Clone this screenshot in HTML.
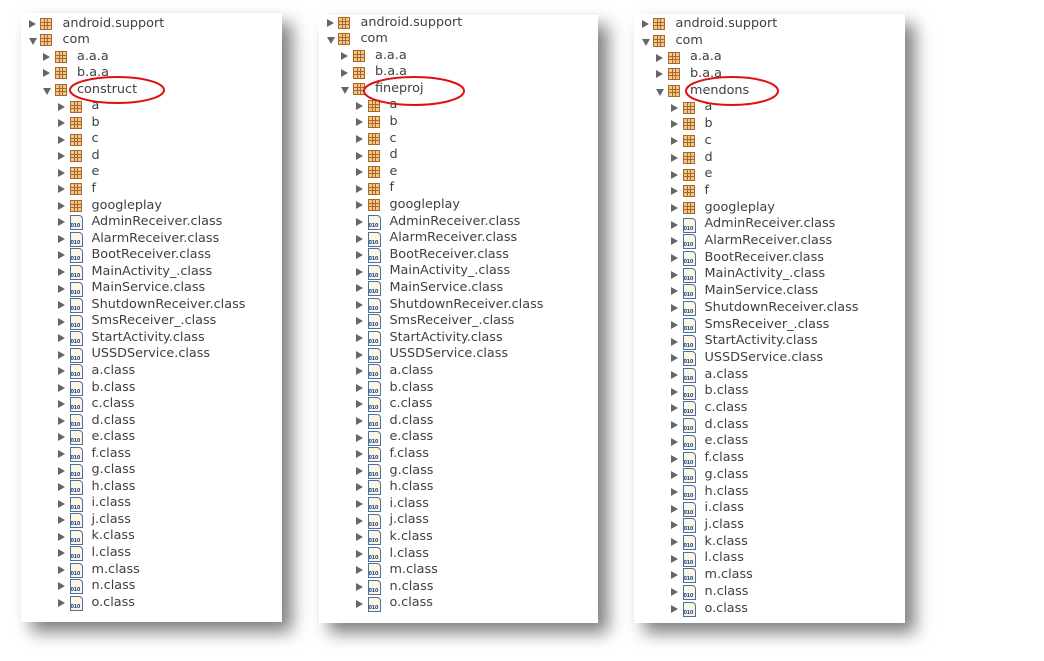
<!DOCTYPE html>
<html><head><meta charset="utf-8"><style>
body{margin:0;width:1044px;height:661px;background:#fff;position:relative;overflow:hidden;font-family:"DejaVu Sans","Liberation Sans",sans-serif;}
.pn{position:absolute;background:#fff;box-shadow:10px 10px 16px rgba(0,0,0,.5);}
.ls{position:absolute;left:0;right:0;}
.r{position:relative;white-space:nowrap;font-size:12.8px;color:#404040;}
.l0{padding-left:41.5px}.l1{padding-left:56px}.l2{padding-left:70.5px}
.x{position:absolute;top:50%;margin-top:-4px;width:0;height:0;border-left:7px solid #666;border-top:4px solid transparent;border-bottom:4px solid transparent;}
.d{position:absolute;top:50%;margin-top:-2px;width:0;height:0;border-top:7px solid #666;border-left:4px solid transparent;border-right:4px solid transparent;}
.l0 .x,.l0 .d{left:8px}.l1 .x,.l1 .d{left:22px}.l2 .x,.l2 .d{left:36.5px}
.k{position:absolute;top:50%;margin-top:-6px;width:10px;height:10px;border:1px solid #a9682a;background:
linear-gradient(90deg,transparent 3px,#a9682a 3px,#a9682a 4px,transparent 4px,transparent 6px,#a9682a 6px,#a9682a 7px,transparent 7px),
linear-gradient(180deg,transparent 3px,#a9682a 3px,#a9682a 4px,transparent 4px,transparent 6px,#a9682a 6px,#a9682a 7px,transparent 7px),#f3c78a;}
.c{position:absolute;top:50%;margin-top:-7px;width:11px;height:13px;border:1px solid #4a6ea8;border-radius:0 4px 0 0;background:#fdf6e0;overflow:hidden;}
.c::after{content:"010";position:absolute;left:0;bottom:0;font:bold 5px "DejaVu Sans",sans-serif;color:#2a4a8a;letter-spacing:-.3px;}
.l0 .k,.l0 .c{left:19px}.l1 .k,.l1 .c{left:33.5px}.l2 .k,.l2 .c{left:48.5px}
</style></head><body>

<div class="pn" style="left:21px;top:13px;width:261px;height:609px"><div class="ls" style="top:2.5px;line-height:16.54px">
<div class="r l0"><s class="x"></s><u class="k"></u>android.support</div>
<div class="r l0"><s class="d"></s><u class="k"></u>com</div>
<div class="r l1"><s class="x"></s><u class="k"></u>a.a.a</div>
<div class="r l1"><s class="x"></s><u class="k"></u>b.a.a</div>
<div class="r l1"><s class="d"></s><u class="k"></u>construct</div>
<div class="r l2"><s class="x"></s><u class="k"></u>a</div>
<div class="r l2"><s class="x"></s><u class="k"></u>b</div>
<div class="r l2"><s class="x"></s><u class="k"></u>c</div>
<div class="r l2"><s class="x"></s><u class="k"></u>d</div>
<div class="r l2"><s class="x"></s><u class="k"></u>e</div>
<div class="r l2"><s class="x"></s><u class="k"></u>f</div>
<div class="r l2"><s class="x"></s><u class="k"></u>googleplay</div>
<div class="r l2"><s class="x"></s><u class="c"></u>AdminReceiver.class</div>
<div class="r l2"><s class="x"></s><u class="c"></u>AlarmReceiver.class</div>
<div class="r l2"><s class="x"></s><u class="c"></u>BootReceiver.class</div>
<div class="r l2"><s class="x"></s><u class="c"></u>MainActivity_.class</div>
<div class="r l2"><s class="x"></s><u class="c"></u>MainService.class</div>
<div class="r l2"><s class="x"></s><u class="c"></u>ShutdownReceiver.class</div>
<div class="r l2"><s class="x"></s><u class="c"></u>SmsReceiver_.class</div>
<div class="r l2"><s class="x"></s><u class="c"></u>StartActivity.class</div>
<div class="r l2"><s class="x"></s><u class="c"></u>USSDService.class</div>
<div class="r l2"><s class="x"></s><u class="c"></u>a.class</div>
<div class="r l2"><s class="x"></s><u class="c"></u>b.class</div>
<div class="r l2"><s class="x"></s><u class="c"></u>c.class</div>
<div class="r l2"><s class="x"></s><u class="c"></u>d.class</div>
<div class="r l2"><s class="x"></s><u class="c"></u>e.class</div>
<div class="r l2"><s class="x"></s><u class="c"></u>f.class</div>
<div class="r l2"><s class="x"></s><u class="c"></u>g.class</div>
<div class="r l2"><s class="x"></s><u class="c"></u>h.class</div>
<div class="r l2"><s class="x"></s><u class="c"></u>i.class</div>
<div class="r l2"><s class="x"></s><u class="c"></u>j.class</div>
<div class="r l2"><s class="x"></s><u class="c"></u>k.class</div>
<div class="r l2"><s class="x"></s><u class="c"></u>l.class</div>
<div class="r l2"><s class="x"></s><u class="c"></u>m.class</div>
<div class="r l2"><s class="x"></s><u class="c"></u>n.class</div>
<div class="r l2"><s class="x"></s><u class="c"></u>o.class</div>
</div></div>

<div class="pn" style="left:319px;top:15px;width:279px;height:608px"><div class="ls" style="top:-0.5px;line-height:16.6px">
<div class="r l0"><s class="x"></s><u class="k"></u>android.support</div>
<div class="r l0"><s class="d"></s><u class="k"></u>com</div>
<div class="r l1"><s class="x"></s><u class="k"></u>a.a.a</div>
<div class="r l1"><s class="x"></s><u class="k"></u>b.a.a</div>
<div class="r l1"><s class="d"></s><u class="k"></u>fineproj</div>
<div class="r l2"><s class="x"></s><u class="k"></u>a</div>
<div class="r l2"><s class="x"></s><u class="k"></u>b</div>
<div class="r l2"><s class="x"></s><u class="k"></u>c</div>
<div class="r l2"><s class="x"></s><u class="k"></u>d</div>
<div class="r l2"><s class="x"></s><u class="k"></u>e</div>
<div class="r l2"><s class="x"></s><u class="k"></u>f</div>
<div class="r l2"><s class="x"></s><u class="k"></u>googleplay</div>
<div class="r l2"><s class="x"></s><u class="c"></u>AdminReceiver.class</div>
<div class="r l2"><s class="x"></s><u class="c"></u>AlarmReceiver.class</div>
<div class="r l2"><s class="x"></s><u class="c"></u>BootReceiver.class</div>
<div class="r l2"><s class="x"></s><u class="c"></u>MainActivity_.class</div>
<div class="r l2"><s class="x"></s><u class="c"></u>MainService.class</div>
<div class="r l2"><s class="x"></s><u class="c"></u>ShutdownReceiver.class</div>
<div class="r l2"><s class="x"></s><u class="c"></u>SmsReceiver_.class</div>
<div class="r l2"><s class="x"></s><u class="c"></u>StartActivity.class</div>
<div class="r l2"><s class="x"></s><u class="c"></u>USSDService.class</div>
<div class="r l2"><s class="x"></s><u class="c"></u>a.class</div>
<div class="r l2"><s class="x"></s><u class="c"></u>b.class</div>
<div class="r l2"><s class="x"></s><u class="c"></u>c.class</div>
<div class="r l2"><s class="x"></s><u class="c"></u>d.class</div>
<div class="r l2"><s class="x"></s><u class="c"></u>e.class</div>
<div class="r l2"><s class="x"></s><u class="c"></u>f.class</div>
<div class="r l2"><s class="x"></s><u class="c"></u>g.class</div>
<div class="r l2"><s class="x"></s><u class="c"></u>h.class</div>
<div class="r l2"><s class="x"></s><u class="c"></u>i.class</div>
<div class="r l2"><s class="x"></s><u class="c"></u>j.class</div>
<div class="r l2"><s class="x"></s><u class="c"></u>k.class</div>
<div class="r l2"><s class="x"></s><u class="c"></u>l.class</div>
<div class="r l2"><s class="x"></s><u class="c"></u>m.class</div>
<div class="r l2"><s class="x"></s><u class="c"></u>n.class</div>
<div class="r l2"><s class="x"></s><u class="c"></u>o.class</div>
</div></div>

<div class="pn" style="left:634px;top:14px;width:271px;height:609px"><div class="ls" style="top:1.9px;line-height:16.71px">
<div class="r l0"><s class="x"></s><u class="k"></u>android.support</div>
<div class="r l0"><s class="d"></s><u class="k"></u>com</div>
<div class="r l1"><s class="x"></s><u class="k"></u>a.a.a</div>
<div class="r l1"><s class="x"></s><u class="k"></u>b.a.a</div>
<div class="r l1"><s class="d"></s><u class="k"></u>mendons</div>
<div class="r l2"><s class="x"></s><u class="k"></u>a</div>
<div class="r l2"><s class="x"></s><u class="k"></u>b</div>
<div class="r l2"><s class="x"></s><u class="k"></u>c</div>
<div class="r l2"><s class="x"></s><u class="k"></u>d</div>
<div class="r l2"><s class="x"></s><u class="k"></u>e</div>
<div class="r l2"><s class="x"></s><u class="k"></u>f</div>
<div class="r l2"><s class="x"></s><u class="k"></u>googleplay</div>
<div class="r l2"><s class="x"></s><u class="c"></u>AdminReceiver.class</div>
<div class="r l2"><s class="x"></s><u class="c"></u>AlarmReceiver.class</div>
<div class="r l2"><s class="x"></s><u class="c"></u>BootReceiver.class</div>
<div class="r l2"><s class="x"></s><u class="c"></u>MainActivity_.class</div>
<div class="r l2"><s class="x"></s><u class="c"></u>MainService.class</div>
<div class="r l2"><s class="x"></s><u class="c"></u>ShutdownReceiver.class</div>
<div class="r l2"><s class="x"></s><u class="c"></u>SmsReceiver_.class</div>
<div class="r l2"><s class="x"></s><u class="c"></u>StartActivity.class</div>
<div class="r l2"><s class="x"></s><u class="c"></u>USSDService.class</div>
<div class="r l2"><s class="x"></s><u class="c"></u>a.class</div>
<div class="r l2"><s class="x"></s><u class="c"></u>b.class</div>
<div class="r l2"><s class="x"></s><u class="c"></u>c.class</div>
<div class="r l2"><s class="x"></s><u class="c"></u>d.class</div>
<div class="r l2"><s class="x"></s><u class="c"></u>e.class</div>
<div class="r l2"><s class="x"></s><u class="c"></u>f.class</div>
<div class="r l2"><s class="x"></s><u class="c"></u>g.class</div>
<div class="r l2"><s class="x"></s><u class="c"></u>h.class</div>
<div class="r l2"><s class="x"></s><u class="c"></u>i.class</div>
<div class="r l2"><s class="x"></s><u class="c"></u>j.class</div>
<div class="r l2"><s class="x"></s><u class="c"></u>k.class</div>
<div class="r l2"><s class="x"></s><u class="c"></u>l.class</div>
<div class="r l2"><s class="x"></s><u class="c"></u>m.class</div>
<div class="r l2"><s class="x"></s><u class="c"></u>n.class</div>
<div class="r l2"><s class="x"></s><u class="c"></u>o.class</div>
</div></div>

<svg width="1044" height="661" style="position:absolute;left:0;top:0;pointer-events:none">
<ellipse cx="117" cy="90" rx="47" ry="13" fill="none" stroke="#e01010" stroke-width="2"/>
<ellipse cx="414" cy="91" rx="50" ry="14" fill="none" stroke="#e01010" stroke-width="2"/>
<ellipse cx="732" cy="91" rx="46" ry="14" fill="none" stroke="#e01010" stroke-width="2"/>
</svg>
</body></html>
